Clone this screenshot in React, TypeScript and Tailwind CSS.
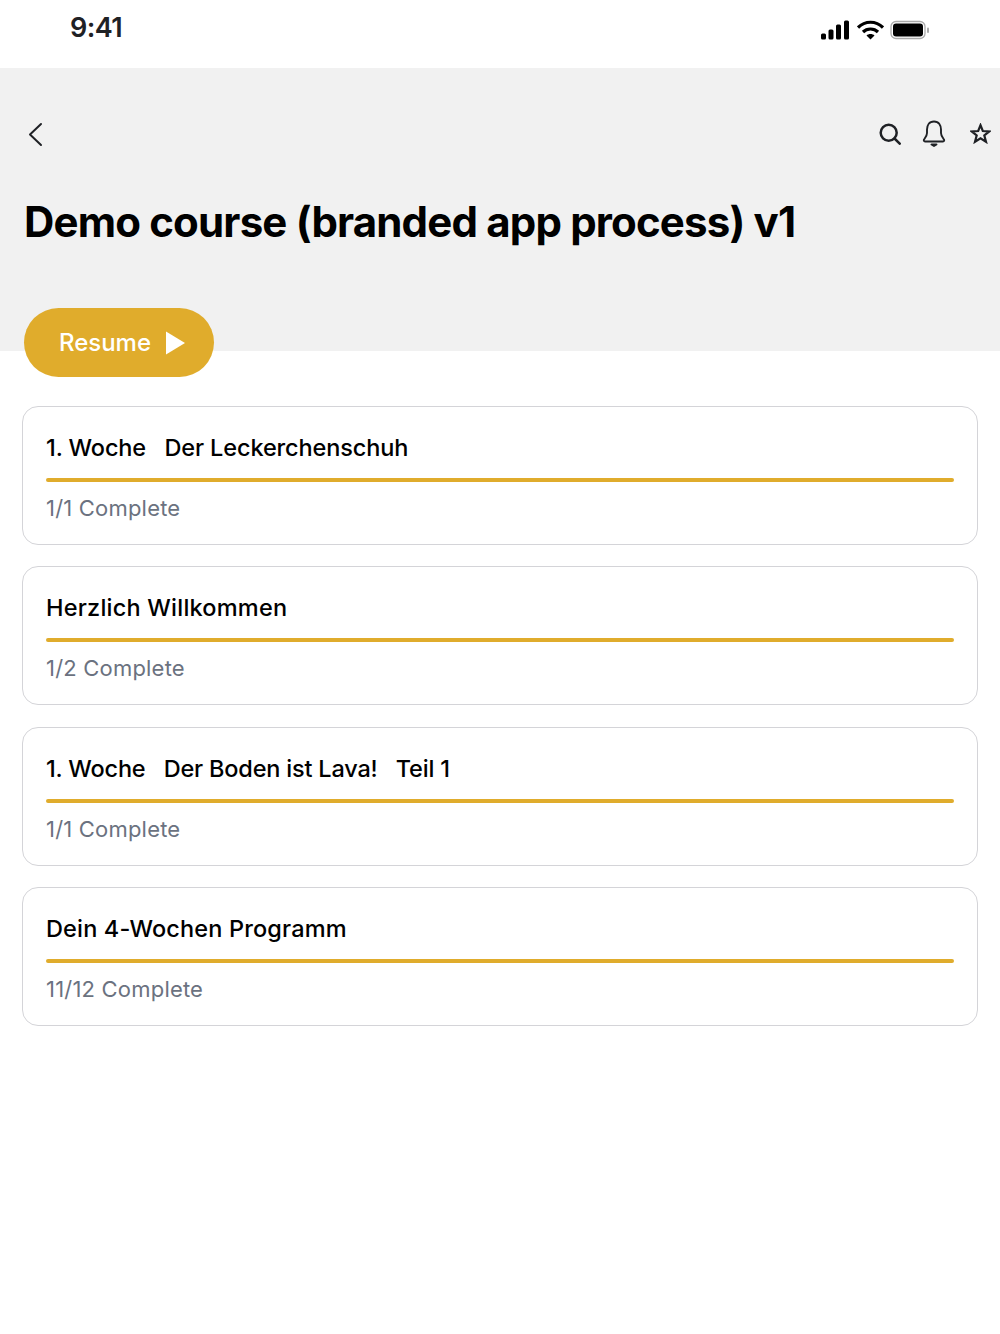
import React from "react";

const rows = [
  { t: "1. Woche\u00a0\u00a0\u00a0Der Leckerchenschuh", s: "1/1 Complete", c: "tracking-[-0.12px]" },
  { t: "Herzlich Willkommen", s: "1/2 Complete", c: "tracking-[0.22px]" },
  { t: "1. Woche\u00a0\u00a0\u00a0Der Boden ist Lava!\u00a0\u00a0\u00a0Teil 1", s: "1/1 Complete", c: "tracking-[-0.19px]" },
  { t: "Dein 4-Wochen Programm", s: "11/12 Complete", c: "tracking-[0.15px]" },
];

export default function App() {
  return (
    <div className="w-[1000px] h-[1334px] bg-white overflow-hidden font-['Inter','Liberation_Sans',sans-serif]">
      <div className="h-[68px] flex items-start justify-between pl-[70px] pr-[70px] pt-[11px]">
        <span className="text-[27px] font-semibold leading-[34px] text-[#1f2125] tracking-[-0.6px]">9:41</span>
        <div className="flex items-center gap-[7px] pt-[9px]">
          <svg width="29" height="20" viewBox="0 0 29 20" fill="#000">
            <rect x="0" y="13.5" width="5" height="6" rx="1.5" />
            <rect x="7.5" y="9.5" width="5" height="10" rx="1.5" />
            <rect x="15" y="4.5" width="5" height="15" rx="1.5" />
            <rect x="23" y="0.5" width="5" height="19" rx="1.5" />
          </svg>
          <svg width="27" height="20" viewBox="0 0 27 20" fill="none" stroke="#000" strokeWidth="3.2">
            <path d="M1 7.5 C8 0.5 19 0.5 26 7.5" />
            <path d="M6 12 C10 8 17 8 21 12" />
            <path d="M13.5 19.5 L9.5 15.5 C11.5 13.5 15.5 13.5 17.5 15.5 Z" fill="#000" stroke="none" />
          </svg>
          <svg width="40" height="20" viewBox="0 0 40 20" fill="none" className="-ml-[1px]">
            <rect x="1" y="1.5" width="34" height="17" rx="5" stroke="#aaa" strokeWidth="1.3" />
            <rect x="3" y="3.5" width="30" height="13" rx="3" fill="#000" />
            <rect x="37" y="7.5" width="2" height="5.5" rx="1" fill="#aaa" />
          </svg>
        </div>
      </div>
      <div className="h-[283px] bg-[#f1f1f1] relative">
        <div className="flex items-center justify-between pt-[51px] pl-[24px] pr-[9px] h-[80px]">
          <svg width="24" height="26" viewBox="0 0 24 26" fill="none" stroke="#1f2125" strokeWidth="2" strokeLinecap="round" strokeLinejoin="round">
            <path d="M17 3 L6 13.5 L17 24" />
          </svg>
          <div className="flex items-center">
            <svg width="22" height="22" viewBox="0 0 22 22" fill="none" stroke="#1f2125" strokeWidth="2.5" strokeLinecap="round">
              <circle cx="9.7" cy="9.7" r="8" />
              <path d="M15.5 15.5 L20.7 20.7" />
            </svg>
            <svg width="24" height="27" viewBox="0 0 24 27" fill="none" stroke="#1f2125" strokeWidth="1.9" strokeLinejoin="round" className="ml-[21px]">
              <path d="M12 1.5 C7 1.5 5 5.5 5 9.5 V13 C5 16 3.5 17.5 2 19.5 C1.5 20.5 2 21.5 3 21.5 H21 C22 21.5 22.5 20.5 22 19.5 C20.5 17.5 19 16 19 13 V9.5 C19 5.5 17 1.5 12 1.5 Z" />
              <path d="M9.5 24.5 H14.5 L12 26 Z" fill="#1f2125" />
            </svg>
            <svg width="21" height="21" viewBox="0 0 21 21" fill="none" stroke="#1f2125" strokeWidth="2.2" strokeLinejoin="miter" className="ml-[24px]">
              <path d="M10.5 2.2 L12.8 8 L19.3 8.4 L14.3 12.4 L16 18.8 L10.5 15.3 L5 18.8 L6.7 12.4 L1.7 8.4 L8.2 8 Z" />
            </svg>
          </div>
        </div>
        <h1 className="pl-[24px] mt-[51px] text-[42px] leading-[46px] font-bold text-black whitespace-nowrap tracking-[-0.83px]">Demo course (branded app process) v1</h1>
        <button className="absolute left-[24px] top-[240px] w-[190px] h-[69px] rounded-full bg-[#e0ac2c] text-white text-[24px] font-medium flex items-center justify-center gap-[15px] pl-[6px]">
          Resume
          <svg width="19" height="24" viewBox="0 0 19 24" fill="#fff"><path d="M0 0.5 L19 12 L0 23.5 Z" /></svg>
        </button>
      </div>
      <div className="flex flex-col gap-[21.33px] px-[22px] pt-[55px]">
        {rows.map(({ t, s, c }) => (
          <div key={t} className="h-[139px] rounded-[16px] border border-[#d4d4d8] px-[23px] pt-[24px]">
            <div className={`text-[23.5px] leading-[34px] font-medium text-black whitespace-nowrap ${c}`}>{t}</div>
            <div className="h-[4px] bg-[#e0ac2c] rounded-full mt-[13px]"></div>
            <div className="text-[22px] leading-[34px] text-[#6b7280] mt-[9px] tracking-[0.2px]">{s}</div>
          </div>
        ))}
      </div>
    </div>
  );
}
